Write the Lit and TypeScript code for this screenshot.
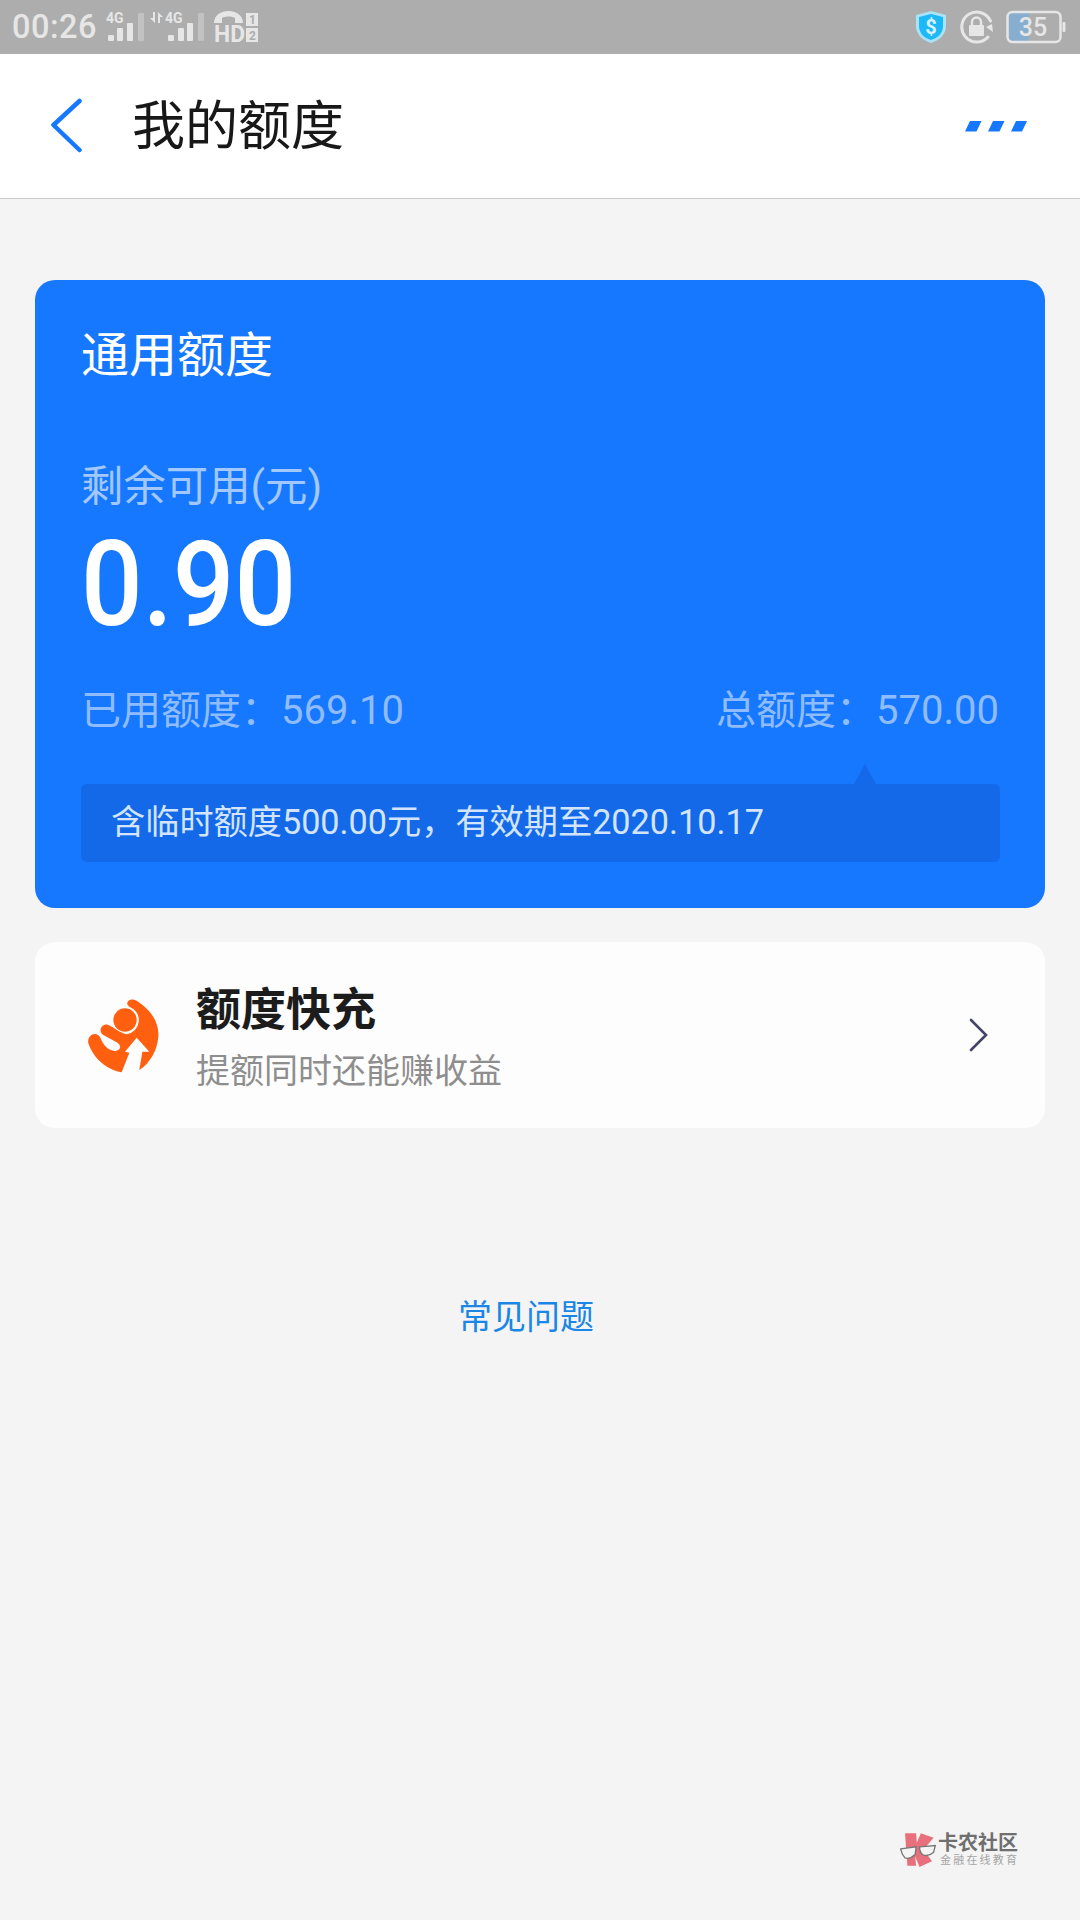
import { LitElement, html, svg, css } from "lit";
import { customElement } from "lit/decorators.js";

const STATUS = "#e6e6e6";

// signal bars, x values are the left edge of each bar
function signalBars(xs: number[]) {
  const tops = [30, 23, 18, 8];
  return xs.map(
    (x, i) => svg`<rect x=${x} y=${tops[i]} width="6" height=${36 - tops[i]} rx="1"
      fill=${i === 3 ? "#c2c2c2" : STATUS} />`
  );
}

@customElement("app-root")
export class AppRoot extends LitElement {
  static styles = css`
    :host {
      display: block;
      width: 1080px;
      height: 1920px;
      background: #f4f4f4;
      font-family: Roboto, "Noto Sans CJK SC", sans-serif;
      position: relative;
      overflow: hidden;
    }

    .status {
      height: 54px;
      background: #adadad;
      display: flex;
      align-items: center;
      justify-content: space-between;
      color: #e6e6e6;
    }
    .status-left {
      display: flex;
      align-items: center;
      padding-left: 12px;
    }
    .time {
      font-size: 32.5px;
      font-weight: 500;
      letter-spacing: 0.5px;
      width: 93px;
    }
    .status-right {
      display: flex;
      align-items: center;
      gap: 13px;
      padding-right: 14px;
    }
    .status svg {
      display: block;
    }

    .nav {
      height: 144px;
      background: #fff;
      border-bottom: 1px solid #c8c8c8;
      display: flex;
      align-items: center;
    }
    .back {
      margin-left: 50px;
      width: 34px;
      height: 56px;
    }
    .nav h1 {
      margin: 2px 0 0 48px;
      font-size: 53px;
      font-weight: 400;
      color: #181818;
      line-height: 1;
    }
    .more {
      margin-left: auto;
      margin-right: 53px;
    }

    .content {
      padding: 81px 35px 0;
      display: flex;
      flex-direction: column;
    }
    .quota {
      height: 628px;
      box-sizing: border-box;
      background: #1677ff;
      border-radius: 20px;
      padding: 41px 46px 0;
      display: flex;
      flex-direction: column;
      color: #fff;
    }
    .quota-title {
      font-size: 48px;
      line-height: 70px;
    }
    .remain {
      margin-top: 66px;
      font-size: 42.4px;
      line-height: 60px;
      color: #a2c8ff;
    }
    .amount {
      font-size: 118px;
      line-height: 110px;
      font-weight: 500;
      margin-top: 13px;
      transform: scaleX(0.92);
      transform-origin: left center;
    }
    .usage {
      margin-top: 43px;
      display: flex;
      justify-content: space-between;
      font-size: 40px;
      line-height: 56px;
      color: #8fbcff;
    }
    .tip {
      position: relative;
      margin: 45px -1px 0 0;
      height: 78px;
      box-sizing: border-box;
      padding-left: 30px;
      background: #1469e8;
      border-radius: 6px;
      color: #d3e4ff;
      font-size: 34.2px;
      line-height: 76px;
    }
    .tip::before {
      content: "";
      position: absolute;
      right: 124px;
      top: -20px;
      border-left: 11px solid transparent;
      border-right: 11px solid transparent;
      border-bottom: 20px solid #1469e8;
    }

    .boost {
      margin-top: 34px;
      height: 186px;
      background: #fdfdfd;
      border-radius: 20px;
      display: flex;
      align-items: center;
    }
    .boost-logo {
      margin-left: 35px;
      width: 100px;
      height: 100px;
    }
    .boost-text {
      margin: 3px 0 0 26px;
      display: flex;
      flex-direction: column;
      gap: 4px;
    }
    .boost-name {
      font-size: 45px;
      font-weight: 700;
      line-height: 64px;
      color: #1c1c1c;
    }
    .boost-desc {
      font-size: 34px;
      line-height: 48px;
      color: #8e8e8e;
    }
    .chevron {
      margin-left: auto;
      margin-right: 56px;
    }

    .faq {
      margin-top: 164px;
      text-align: center;
      font-size: 34px;
      line-height: 50px;
      color: #1a86e6;
      padding-right: 28px;
    }

    /* watermark sits on top of the page */
    .mark {
      position: absolute;
      left: 900px;
      top: 1831px;
      display: flex;
      align-items: center;
      gap: 1px;
    }
    .mark-text {
      display: flex;
      flex-direction: column;
    }
    .mark-name {
      font-size: 20px;
      font-weight: 700;
      line-height: 22px;
      color: #6f6f6f;
    }
    .mark-sub {
      font-size: 11px;
      line-height: 13px;
      letter-spacing: 2.2px;
      color: #a5a5a5;
      margin-left: 2px;
    }
  `;

  private renderStatusLeft() {
    return html`
      <svg width="156" height="44" viewBox="105 5 156 44">
        <text x="106" y="23" font-size="14" font-weight="700" fill=${STATUS} font-family="Roboto">4G</text>
        <g transform="translate(0,5)">${signalBars([108, 117, 127, 138])}</g>
        <path d="M155 12v11l-5-5h3v-6zM158 23V12l5 5h-3v6z" fill=${STATUS} />
        <text x="165" y="23" font-size="14" font-weight="700" fill=${STATUS} font-family="Roboto">4G</text>
        <g transform="translate(0,5)">${signalBars([168, 178, 187, 198])}</g>
        <path d="M214 23c0-16 29-16 29 0h-8v-5c-3-2-10-2-13 0v5z" fill=${STATUS} />
        <text x="214" y="42" font-size="24" font-weight="700" fill=${STATUS} font-family="Roboto" textLength="31" lengthAdjust="spacingAndGlyphs">HD</text>
        <rect x="246" y="13" width="12" height="13" fill=${STATUS} />
        <rect x="246" y="28" width="12" height="14" fill=${STATUS} />
        <text x="249" y="24" font-size="12" font-weight="700" fill="#adadad" font-family="Roboto">1</text>
        <text x="249" y="40" font-size="12" font-weight="700" fill="#adadad" font-family="Roboto">2</text>
      </svg>
    `;
  }

  private renderStatusRight() {
    return html`
      <svg width="32" height="34" viewBox="0 0 32 34">
        <path d="M16 1l15 4v11c0 8-6 14-15 17C7 30 1 24 1 16V5z" fill="#a9e3fa" />
        <path d="M16 4l12 3v9c0 7-5 12-12 14C9 28 4 23 4 16V7z" fill="#1cb8f8" />
        <text x="16" y="24" text-anchor="middle" font-size="20" font-weight="700" fill="#d8f3ff" font-family="Roboto">$</text>
      </svg>
      <svg width="33" height="34" viewBox="0 0 33 34">
        <path d="M28 27A15 15 0 1 1 30.500 11" fill="none" stroke=${STATUS} stroke-width="3" stroke-linecap="round" />
        <path d="M26 17l6-3 1 8z" fill=${STATUS} />
        <rect x="9" y="15" width="15" height="11" rx="1" fill=${STATUS} />
        <path d="M12 15v-3a4.500 4.500 0 0 1 9 0v3" fill="none" stroke=${STATUS} stroke-width="2.400" />
      </svg>
      <svg width="60" height="34" viewBox="0 0 60 34">
        <rect x="3" y="3" width="20" height="28" fill="#88aecf" />
        <rect x="1.500" y="2" width="53" height="30" rx="5" fill="none" stroke=${STATUS} stroke-width="2.500" />
        <rect x="56.500" y="12" width="3" height="10" rx="1" fill=${STATUS} />
        <text x="27" y="26" text-anchor="middle" font-size="25" font-weight="500" fill=${STATUS} font-family="Roboto">35</text>
      </svg>
    `;
  }

  render() {
    return html`
      <div class="status">
        <div class="status-left">
          <span class="time">00:26</span>
          ${this.renderStatusLeft()}
        </div>
        <div class="status-right">${this.renderStatusRight()}</div>
      </div>

      <div class="nav">
        <svg class="back" viewBox="0 0 34 56">
          <path d="M29.500 3L3.500 27l26 25" fill="none" stroke="#1677ff" stroke-width="4.500" stroke-linecap="round" stroke-linejoin="round" />
        </svg>
        <h1>我的额度</h1>
        <svg class="more" width="62" height="11" viewBox="0 0 62 11">
          <path d="M5 0h11.500l-5 10.500H0zM28 0h11.500l-5 10.500H23zM51 0h11l-5 10.500H46z" fill="#1677ff" />
        </svg>
      </div>

      <div class="content">
        <div class="quota">
          <div class="quota-title">通用额度</div>
          <div class="remain">剩余可用(元)</div>
          <div class="amount">0.90</div>
          <div class="usage">
            <span>已用额度：569.10</span>
            <span>总额度：570.00</span>
          </div>
          <div class="tip">含临时额度500.00元，有效期至2020.10.17</div>
        </div>

        <div class="boost">
          <svg class="boost-logo" viewBox="0 0 300 300">
            <path
              d="M175 48C185 38 200 45 215 58C250 85 268 120 265 155C262 195 240 235 208 255L217 200L238 200L200 158L165 200L178 203L155 262C110 255 70 220 55 175C50 150 80 135 92 160C100 185 125 205 145 195C155 188 150 178 140 172L100 150C80 135 100 110 120 122C135 130 145 140 170 148A43 43 0 0 0 178 65C170 60 170 54 175 48Z"
              fill="#ff6010"
            />
            <circle cx="165" cy="105" r="35" fill="#ff6010" />
          </svg>
          <div class="boost-text">
            <span class="boost-name">额度快充</span>
            <span class="boost-desc">提额同时还能赚收益</span>
          </div>
          <svg class="chevron" width="20" height="34" viewBox="0 0 20 34">
            <path d="M2 2l15 15L2 32" fill="none" stroke="#44446a" stroke-width="2.600" stroke-linecap="round" />
          </svg>
        </div>

        <div class="faq">常见问题</div>
      </div>

      <div class="mark">
        <svg width="37" height="37" viewBox="60 65 110 110">
          <path d="M75 72L108 72L110 100L122 72L160 85L130 120L155 155L118 172L105 140L108 168L82 168Z" fill="#e8707c" />
          <path d="M62 118L108 112L105 135Q90 150 75 145Q65 135 62 118Z" fill="#f4f4f4" stroke="#777" stroke-width="4" />
          <path d="M118 112L165 108L160 128Q145 142 128 136Q118 128 118 112Z" fill="#f4f4f4" stroke="#777" stroke-width="4" />
        </svg>
        <div class="mark-text">
          <span class="mark-name">卡农社区</span>
          <span class="mark-sub">金融在线教育</span>
        </div>
      </div>
    `;
  }
}
